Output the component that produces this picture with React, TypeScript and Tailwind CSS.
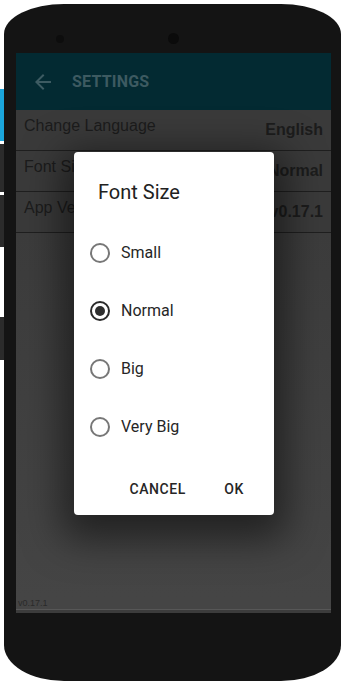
import React from "react";

const options = ["Small", "Normal", "Big", "Very Big"];

const rows = [
  { label: "Change Language", value: "English" },
  { label: "Font Size", value: "Normal" },
  { label: "App Version", value: "v0.17.1" },
];

function SideStrip() {
  return (
    <div className="flex w-[4px] shrink-0 flex-col">
      <div className="h-[89px] bg-white" />
      <div className="h-[52px] bg-[#1ba6dc]" />
      <div className="h-[3px] bg-white" />
      <div className="h-[48px] bg-[#2b2b2b]" />
      <div className="h-[3px] bg-white" />
      <div className="h-[52px] bg-[#2b2b2b]" />
      <div className="h-[70px] bg-white" />
      <div className="h-[43px] bg-[#2b2b2b]" />
      <div className="flex-1 bg-white" />
    </div>
  );
}

function Radio({ checked }: { checked: boolean }) {
  return (
    <span
      className={
        checked
          ? "flex h-[20px] w-[20px] items-center justify-center rounded-full border-2 border-[#2a2a2a]"
          : "flex h-[20px] w-[20px] items-center justify-center rounded-full border-2 border-[#777777]"
      }
    >
      {checked && <span className="h-[10px] w-[10px] rounded-full bg-[#2e2e2e]" />}
    </span>
  );
}

function FontSizeDialog() {
  return (
    <div className="absolute left-[58px] top-[99px] flex h-[363px] w-[200px] flex-col rounded-[4px] bg-white font-['Roboto',sans-serif] shadow-[0_12px_38px_12px_rgba(0,0,0,0.5)]">
      <h2 className="pl-[24px] pt-[24px] text-[20px] font-normal leading-[32px] text-[#212121]">
        Font Size
      </h2>
      <div className="mt-[16px] flex flex-col">
        {options.map((opt) => (
          <div key={opt} className="flex h-[58px] items-center pl-[16px]">
            <Radio checked={opt === "Normal"} />
            <span className="ml-[11px] text-[16px] leading-[20px] text-[#262626]">
              {opt}
            </span>
          </div>
        ))}
      </div>
      <div className="mt-[15px] flex justify-end gap-[8px] pr-[8px]">
        <button className="h-[36px] min-w-[64px] px-[8px] text-[14px] font-medium tracking-[0.6px] text-[#262626]">
          CANCEL
        </button>
        <button className="h-[36px] min-w-[64px] px-[8px] text-[14px] font-medium tracking-[0.6px] text-[#262626]">
          OK
        </button>
      </div>
    </div>
  );
}

export default function App() {
  return (
    <div className="flex h-[685px] w-[344px] overflow-hidden bg-white">
      <SideStrip />
      <div className="mb-[4px] mr-[3px] mt-[4px] flex flex-1 flex-col rounded-b-[60px_36px] rounded-t-[60px_30px] bg-[#141414]">
        <div className="flex h-[49px] items-start pt-[29px]">
          <span className="ml-[52px] mt-[2px] h-[8px] w-[8px] rounded-full bg-[#0d0d0d]" />
          <span className="ml-[104px] h-[11px] w-[11px] rounded-full bg-[#0b0b0b]" />
        </div>

        <div className="relative ml-[12px] flex h-[560px] w-[315px] flex-col bg-[#3e3e3e] font-['Liberation_Sans',Arial,sans-serif]">
          <div className="flex h-[57px] shrink-0 items-center bg-[#032a32]">
            <svg className="ml-[15px]" width="24" height="24" viewBox="0 0 24 24">
              <path
                fill="#3d5b62"
                d="M20 11H7.83l5.59-5.59L12 4l-8 8 8 8 1.41-1.41L7.83 13H20v-2z"
              />
            </svg>
            <span className="ml-[17px] font-['Roboto',sans-serif] text-[16px] font-bold tracking-[0.2px] text-[#3d5a61]">
              SETTINGS
            </span>
          </div>

          <div className="flex flex-col bg-[#3a3a3a]">
            {rows.map((row) => (
              <div
                key={row.label}
                className="flex h-[41px] items-start justify-between border-b border-[#1f1f1f] px-[8px]"
              >
                <span className="pt-[7px] text-[16px] leading-[18px] text-[#1c1c1c]">
                  {row.label}
                </span>
                <span className="pt-[11px] text-[16px] font-bold leading-[18px] text-[#1c1c1c]">
                  {row.value}
                </span>
              </div>
            ))}
          </div>

          <div className="flex-1 bg-gradient-to-b from-[#3c3c3c] to-[#454545]" />
          <div className="bg-[#454545] pb-[1px] pl-[2px] text-[9px] leading-[10px] text-[#2a2a2a]">
            v0.17.1
          </div>
          <div className="h-[4px] border-t border-[#575757] bg-[#3c3c3c]" />

          <FontSizeDialog />
        </div>

        <div className="flex-1" />
      </div>
    </div>
  );
}
